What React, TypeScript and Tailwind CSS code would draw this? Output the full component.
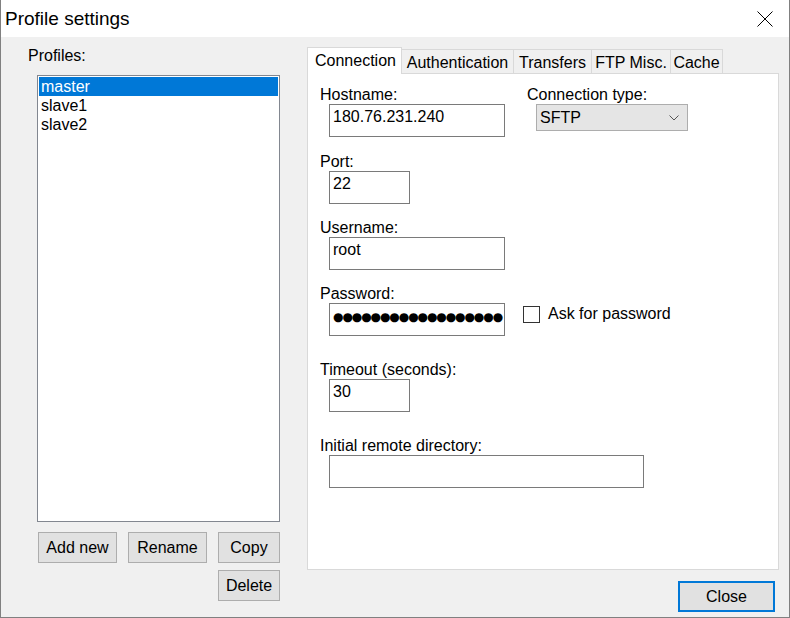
import React from "react";

const tabs = [
  { label: "Connection", w: "w-[95px]" },
  { label: "Authentication", w: "w-[112px]" },
  { label: "Transfers", w: "w-[78px]" },
  { label: "FTP Misc.", w: "w-[79px]" },
  { label: "Cache", w: "w-[52px]" },
];

function Field({ label, children, className = "" }: { label: string; children: React.ReactNode; className?: string }) {
  return (
    <div className={className}>
      <div className="leading-[17px] h-[17px]">{label}</div>
      <div className="mt-px">{children}</div>
    </div>
  );
}

function TextBox({ value, w }: { value?: string; w: string }) {
  return (
    <div className={`${w} ml-[9px] h-[33px] border border-[#7a7a7a] bg-white pl-[3px] pt-[3px] leading-[18px]`}>
      {value}
    </div>
  );
}

function Button({ label, w, active }: { label: string; w: string; active?: boolean }) {
  return (
    <button
      className={`${w} h-[31px] flex items-center justify-center bg-[#e1e1e1] ${
        active ? "border-2 border-[#0078d7]" : "border border-[#adadad]"
      }`}
    >
      {label}
    </button>
  );
}

export default function App() {
  return (
    <div className="w-[790px] h-[618px] flex flex-col bg-[#f0f0f0] border-x border-b border-[#808080] text-black text-[16px] font-['Liberation_Sans',Arial,sans-serif] overflow-hidden">
      {/* Title bar */}
      <div className="h-[37px] flex-none bg-white flex items-center justify-between pl-[4px] pr-[16px]">
        <span className="text-[19px] leading-[37px]">Profile settings</span>
        <svg width="16" height="16" viewBox="0 0 16 16" className="mt-[1px]">
          <path d="M0.5 0.5 L15.5 15.5 M15.5 0.5 L0.5 15.5" stroke="#000" strokeWidth="1" fill="none" />
        </svg>
      </div>

      <div className="flex flex-1">
        {/* Profiles */}
        <div className="w-[279px] flex-none pt-[10px]">
          <div className="pl-[27px] leading-[18px]">Profiles:</div>
          <div className="ml-[36px] mt-[10px] w-[243px] h-[447px] border border-[#828790] bg-white p-px">
            <div className="h-[19px] leading-[19px] pl-[2px] bg-[#0078d7] text-white">master</div>
            <div className="h-[19px] leading-[19px] pl-[2px]">slave1</div>
            <div className="h-[19px] leading-[19px] pl-[2px]">slave2</div>
          </div>
          <div className="ml-[37px] mt-[10px] flex gap-[11px]">
            <Button label="Add new" w="w-[79px]" />
            <Button label="Rename" w="w-[79px]" />
            <Button label="Copy" w="w-[62px]" />
          </div>
          <div className="ml-[217px] mt-[7px]">
            <Button label="Delete" w="w-[62px]" />
          </div>
        </div>

        {/* Tabs */}
        <div className="ml-[27px] w-[472px] flex-none pt-[10px]">
          <div className="flex items-end h-[26px]">
            {tabs.map((t, i) =>
              i === 0 ? (
                <div
                  key={t.label}
                  className={`${t.w} h-[27px] -mb-px relative z-10 bg-white border-l border-t border-r border-[#d9d9d9] pl-[7px] pt-[4px] leading-[18px]`}
                >
                  {t.label}
                </div>
              ) : (
                <div
                  key={t.label}
                  className={`${t.w} h-[24px] bg-[#f0f0f0] border-t border-r border-[#d9d9d9] text-center pt-[4px] leading-[18px]`}
                >
                  {t.label}
                </div>
              )
            )}
          </div>
          <div className="h-[497px] border border-[#d9d9d9] bg-white pl-[12px] pt-[12px]">
            <div className="flex">
              <Field label="Hostname:" className="w-[207px]">
                <TextBox value="180.76.231.240" w="w-[176px]" />
              </Field>
              <Field label="Connection type:">
                <div className="ml-[9px] w-[152px] h-[27px] border border-[#adadad] bg-[#e5e5e5] flex items-center justify-between pl-[3px] pr-[8px] leading-[18px]">
                  <span>SFTP</span>
                  <svg width="10" height="6" viewBox="0 0 10 6">
                    <path d="M0.5 0.5 L5 5 L9.5 0.5" stroke="#555" strokeWidth="1" fill="none" />
                  </svg>
                </div>
              </Field>
            </div>

            <Field label="Port:" className="mt-[16px]">
              <TextBox value="22" w="w-[81px]" />
            </Field>

            <Field label="Username:" className="mt-[15px]">
              <TextBox value="root" w="w-[176px]" />
            </Field>

            <Field label="Password:" className="mt-[15px]">
              <div className="flex items-start">
                <div className="w-[176px] ml-[9px] h-[33px] border border-[#7a7a7a] bg-white pl-[3px] pb-[5px] flex items-center">
                  {Array.from({ length: 18 }).map((_, i) => (
                    <span key={i} className="w-[9.4px] flex-none text-center text-[12px] leading-[12px] font-['DejaVu_Sans',sans-serif]">
                      ●
                    </span>
                  ))}
                </div>
                <div className="ml-[18px] mt-[2px] flex items-center gap-[8px]">
                  <div className="w-[17px] h-[17px] border border-[#333] bg-white" />
                  <span className="leading-[18px]">Ask for password</span>
                </div>
              </div>
            </Field>

            <Field label="Timeout (seconds):" className="mt-[25px]">
              <TextBox value="30" w="w-[81px]" />
            </Field>

            <Field label="Initial remote directory:" className="mt-[25px]">
              <TextBox w="w-[315px]" />
            </Field>
          </div>
          <div className="mt-[11px] flex justify-end pr-[4px]">
            <Button label="Close" w="w-[97px]" active />
          </div>
        </div>
      </div>
    </div>
  );
}
